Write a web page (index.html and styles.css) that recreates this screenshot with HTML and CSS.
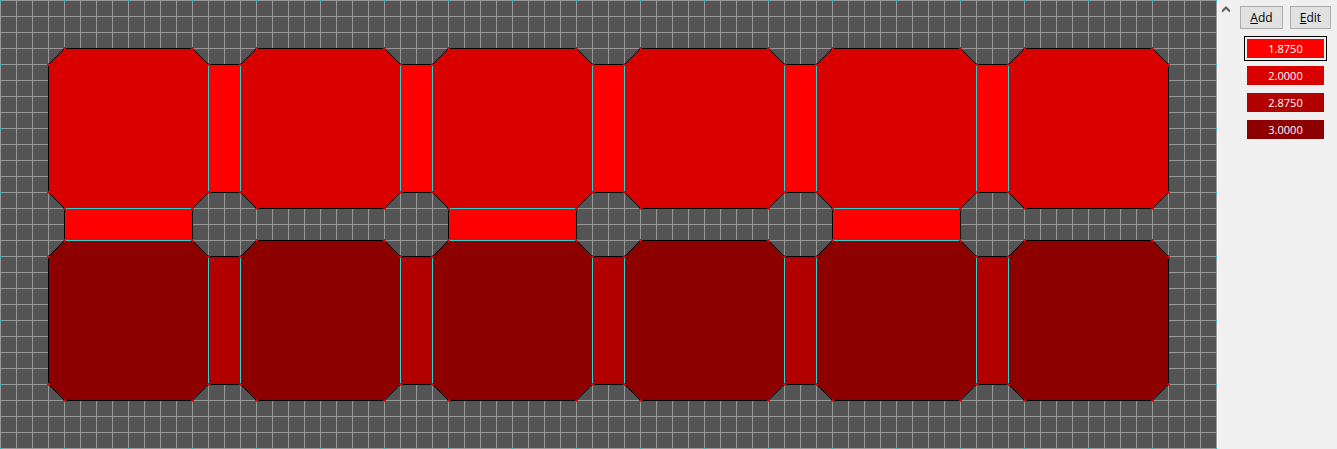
FILE: index.html
```html
<!DOCTYPE html>
<html lang="en">
<head>
<meta charset="utf-8">
<title>Sector map</title>
<link rel="stylesheet" href="styles.css">
</head>
<body>
<div class="editor">
  <main class="map">
    <svg class="map-canvas" role="img" aria-label="Sector map">
      <defs>
        <pattern id="grid" width="16" height="16" patternUnits="userSpaceOnUse">
          <path class="grid-line" d="M0 0H16V1H1V16H0Z"/>
        </pattern>
        <pattern id="dots" width="64" height="64" patternUnits="userSpaceOnUse">
          <path class="grid-dot" d="M0 0H2V1H1V2H0ZM63 0H64V1H63ZM0 63H1V64H0Z"/>
        </pattern>
        <path id="room" d="M16.5 .5H144.5L160.5 16.5V144.5L144.5 160.5H16.5L.5 144.5V16.5Z"/>
        <g id="door">
          <path d="M0 0H32V128H0Z"/>
          <path class="wall" d="M0 .5H33M0 128.5H33"/>
          <path class="portal" d="M.5 1V128M32.5 1V128"/>
        </g>
        <g id="drop">
          <path d="M0 0H128V32H0Z"/>
          <path class="wall" d="M.5 0V33M128.5 0V33"/>
          <path class="portal" d="M1 .5H128M1 32.5H128"/>
        </g>
        <path id="vertices" d="M15 0H18V1H15ZM16 -1H17V2H16ZM143 0H146V1H143ZM144 -1H145V2H144ZM15 160H18V161H15ZM16 159H17V162H16ZM143 160H146V161H143ZM144 159H145V162H144ZM-1 16H2V17H-1ZM0 15H1V18H0ZM159 16H162V17H159ZM160 15H161V18H160ZM-1 144H2V145H-1ZM0 143H1V146H0ZM159 144H162V145H159ZM160 143H161V146H160Z"/>
        <g id="room-row">
          <use href="#room"/><use href="#room" x="192"/><use href="#room" x="384"/><use href="#room" x="576"/><use href="#room" x="768"/><use href="#room" x="960"/>
        </g>
        <g id="door-row">
          <use href="#door"/><use href="#door" x="192"/><use href="#door" x="384"/><use href="#door" x="576"/><use href="#door" x="768"/>
        </g>
        <g id="vertex-row">
          <use href="#vertices"/><use href="#vertices" x="192"/><use href="#vertices" x="384"/><use href="#vertices" x="576"/><use href="#vertices" x="768"/><use href="#vertices" x="960"/>
        </g>
      </defs>
      <rect width="100%" height="100%" fill="url(#grid)"/>
      <rect width="100%" height="100%" fill="url(#dots)"/>
      <g class="room level-2"><use href="#room-row" x="48" y="48"/></g>
      <g class="room level-4"><use href="#room-row" x="48" y="240"/></g>
      <g class="level-1">
        <use href="#door-row" x="208" y="64"/>
        <use href="#drop" x="64" y="208"/><use href="#drop" x="448" y="208"/><use href="#drop" x="832" y="208"/>
      </g>
      <g class="level-3"><use href="#door-row" x="208" y="256"/></g>
      <g class="vertex"><use href="#vertex-row" x="48" y="48"/><use href="#vertex-row" x="48" y="240"/></g>
    </svg>
  </main>
  <aside class="sidebar">
    <button class="scroll-up" type="button" aria-label="Scroll up">
      <svg class="chevron" viewBox="0 0 8 6" aria-hidden="true"><path d="M0 4L4 0L8 4V6H7L4 3L1 6H0Z"/></svg>
    </button>
    <div class="panel">
      <div class="actions">
        <button class="action action-add" type="button" accesskey="a"><u>A</u>dd</button>
        <button class="action action-edit" type="button" accesskey="e"><u>E</u>dit</button>
      </div>
      <div class="levels">
        <button class="level selected" type="button" aria-pressed="true"><span class="swatch level-1">1.8750</span></button>
        <button class="level" type="button" aria-pressed="false"><span class="swatch level-2">2.0000</span></button>
        <button class="level" type="button" aria-pressed="false"><span class="swatch level-3">2.8750</span></button>
        <button class="level" type="button" aria-pressed="false"><span class="swatch level-4">3.0000</span></button>
      </div>
    </div>
  </aside>
</div>
</body>
</html>
```
FILE: styles.css
```css
* { box-sizing: border-box; }

body {
  margin: 0;
  font-family: "Open Sans", "Noto Sans", sans-serif;
  font-size: 12px;
  color: #000;
  background: #f0f0f0;
}

.editor { display: flex; height: 100vh; }

.map { flex: 1; min-width: 0; background: #545454; }
.map-canvas { display: block; width: 100%; height: 100%; shape-rendering: crispEdges; }

.grid-line { fill: #989898; }
.grid-dot { fill: #00d0d0; }
.room, .wall { stroke: #000; }
.portal { stroke: #30d0d0; }
.vertex { fill: #f00; }

.level-1 { fill: #f00; background: #f00; }
.level-2 { fill: #d90000; background: #d90000; }
.level-3 { fill: #b20000; background: #b20000; }
.level-4 { fill: #8c0000; background: #8c0000; }

.sidebar {
  display: flex;
  align-items: flex-start;
  border-left: 1px solid #fff;
  background: #f0f0f0;
}

.scroll-up {
  display: flex;
  justify-content: center;
  width: 16px;
  padding: 6px 0;
  border: 0;
  background: none;
}
.chevron { width: 8px; height: 6px; fill: #606060; }

.panel { display: flex; flex-direction: column; gap: 7px; padding: 6px; }
.actions { display: flex; gap: 7px; }
.action {
  height: 23px;
  padding: 0;
  border: 1px solid #adadad;
  background: #e1e1e1;
  font: inherit;
  line-height: 20px;
  color: #000;
}
.action-add { width: 43px; }
.action-edit { width: 41px; }

.levels { display: flex; flex-direction: column; gap: 2px; padding: 0 4px; }
.level {
  padding: 2px;
  border: 1px solid transparent;
  background: none;
  font: inherit;
  font-size: 11px;
}
.selected { border-color: #000; }
.swatch { display: block; line-height: 19px; color: #fff; }
```
